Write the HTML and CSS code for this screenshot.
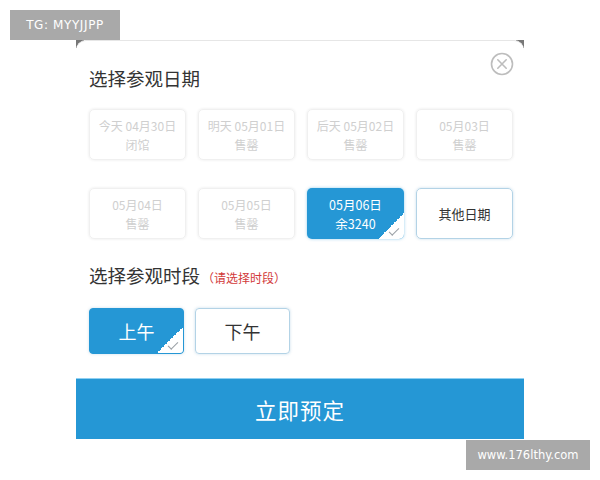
FILE: index.html
```html
<!DOCTYPE html>
<html>
<head>
<meta charset="utf-8">
<link rel="stylesheet" href="styles.css">
</head>
<body>
<div class="wm wm-top">TG: MYYJJPP</div>
<div class="stage">
  <div class="corner corner-l"></div>
  <div class="corner corner-r"></div>
  <div class="card">
    <div class="head">
      <h2 class="title">选择参观日期</h2>
      <svg class="close" width="24" height="24" viewBox="0 0 24 24">
        <circle cx="12" cy="12" r="10.5" fill="none" stroke="#bdbdbd" stroke-width="1.6"/>
        <path d="M7.8 7.8 L16.2 16.2 M16.2 7.8 L7.8 16.2" stroke="#bdbdbd" stroke-width="1.6" stroke-linecap="round"/>
      </svg>
    </div>
    <div class="dates">
      <div class="date off"><span>今天 04月30日</span><span>闭馆</span></div>
      <div class="date off"><span>明天 05月01日</span><span>售罄</span></div>
      <div class="date off"><span>后天 05月02日</span><span>售罄</span></div>
      <div class="date off"><span>05月03日</span><span>售罄</span></div>
      <div class="date off"><span>05月04日</span><span>售罄</span></div>
      <div class="date off"><span>05月05日</span><span>售罄</span></div>
      <div class="date on"><span>05月06日</span><span>余3240</span><i class="tick"></i></div>
      <div class="date other"><span>其他日期</span></div>
    </div>
    <h2 class="title sub">选择参观时段<em class="hint">（请选择时段）</em></h2>
    <div class="times">
      <div class="time on">上午<i class="tick"></i></div>
      <div class="time">下午</div>
    </div>
    <div class="submit">立即预定</div>
  </div>
</div>
<div class="wm wm-bottom">www.176lthy.com</div>
</body>
</html>
```
FILE: styles.css
```css
html, body {
  margin: 0;
  padding: 0;
  background: #fff;
  font-family: "Noto Sans CJK SC", "Noto Sans", sans-serif;
}
body {
  width: 600px;
  height: 480px;
  position: relative;
  overflow: hidden;
}
.wm {
  position: absolute;
  background: #a9a9a9;
  color: #fff;
  font-family: "DejaVu Sans", sans-serif;
  display: flex;
  align-items: center;
  justify-content: center;
  z-index: 5;
}
.wm-top {
  left: 10px;
  top: 10px;
  width: 110px;
  height: 30px;
  font-size: 12px;
  letter-spacing: 0.6px;
}
.wm-bottom {
  left: 466px;
  top: 440px;
  width: 124px;
  height: 30px;
  font-size: 11.5px;
}
.stage {
  position: relative;
  margin: 40px 0 0 76px;
  width: 448px;
}
.corner {
  position: absolute;
  top: 0;
  width: 8px;
  height: 8px;
  background: #777;
}
.corner-l { left: 0; }
.corner-r { right: 0; }
.card {
  position: relative;
  background: #fff;
  border-top: 1px solid #e6e6e6;
  border-radius: 10px 10px 0 0;
  padding-top: 25px;
}
.head {
  display: flex;
  justify-content: space-between;
  align-items: flex-start;
  padding: 0 10px 0 13px;
}
.close {
  margin-top: -14px;
}
.title {
  margin: 0;
  font-weight: normal;
  font-size: 18.5px;
  line-height: 24px;
  color: #333;
}
.sub {
  margin: 24px 0 0 13px;
  display: flex;
  align-items: baseline;
}
.hint {
  font-style: normal;
  font-size: 12px;
  color: #d23a3a;
  margin-left: 2px;
}
.dates {
  margin: 19px 0 0 13px;
  display: grid;
  grid-template-columns: repeat(4, 97px);
  column-gap: 12px;
  row-gap: 28px;
}
.date {
  position: relative;
  height: 51px;
  box-sizing: border-box;
  border-radius: 5px;
  display: flex;
  flex-direction: column;
  align-items: center;
  justify-content: center;
  font-size: 12px;
  line-height: 19px;
  overflow: hidden;
}
.date.off {
  border: 1px solid #f0f0f0;
  box-shadow: 0 0 3px rgba(0, 0, 0, 0.09);
  color: #cfcfcf;
}
.date.on {
  background: #2597d5;
  color: #fff;
  font-size: 12.5px;
  line-height: 19px;
  box-shadow: 0 0 3px rgba(37, 151, 213, 0.5);
}
.date.other {
  border: 1px solid #b3d3e6;
  box-shadow: 0 0 3px rgba(37, 120, 170, 0.25);
  color: #333;
  font-size: 13px;
}
.tick {
  position: absolute;
  right: 0;
  bottom: 0;
  width: 26px;
  height: 26px;
  background: linear-gradient(135deg, transparent 50%, #fff 50%);
}
.tick::after {
  content: "";
  position: absolute;
  right: 5px;
  bottom: 6px;
  width: 9px;
  height: 4px;
  border-left: 1.3px solid #9aa0a6;
  border-bottom: 1.3px solid #9aa0a6;
  transform: rotate(-45deg);
}
.times {
  margin: 18px 0 0 13px;
  display: flex;
  gap: 11px;
}
.time {
  position: relative;
  width: 95px;
  height: 46px;
  box-sizing: border-box;
  border-radius: 4px;
  border: 1px solid #b3d3e6;
  box-shadow: 0 0 3px rgba(37, 120, 170, 0.25);
  display: flex;
  align-items: center;
  justify-content: center;
  font-size: 18px;
  color: #333;
  overflow: hidden;
}
.time.on {
  background: #2597d5;
  border-color: #2597d5;
  color: #fff;
}
.submit {
  margin-top: 24px;
  height: 61px;
  background: #2597d5;
  border-top: 1px solid #8fd0f2;
  box-sizing: border-box;
  color: #fff;
  font-size: 21.5px;
  letter-spacing: 1px;
  display: flex;
  align-items: center;
  justify-content: center;
}
```
